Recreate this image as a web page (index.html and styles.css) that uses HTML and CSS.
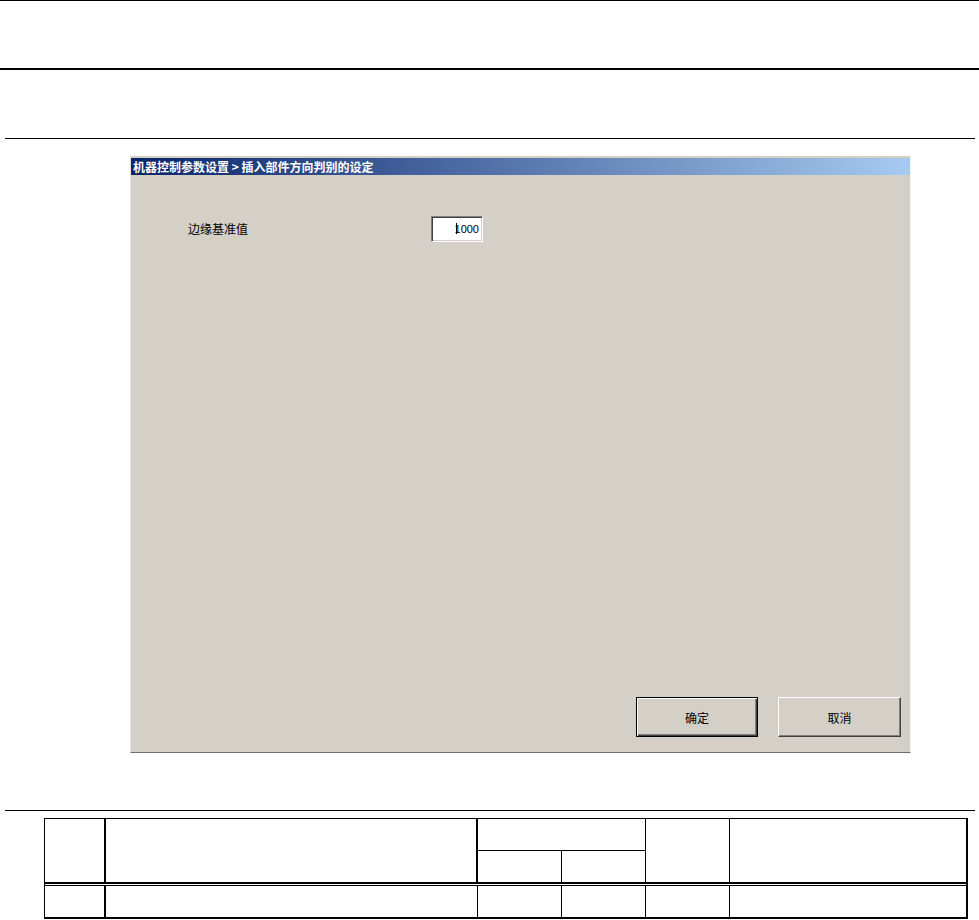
FILE: index.html
```html
<!DOCTYPE html>
<html lang="zh-CN">
<head>
<meta charset="utf-8">
<title>插入部件方向判别的设定</title>
<link rel="stylesheet" href="styles.css">
</head>
<body>
<div class="page">
  <div class="rule rule-top"></div>
  <div class="rule rule-thick"></div>
  <div class="rule rule-thin rule-a"></div>

  <section class="window">
    <div class="titlebar"><span class="title">机器控制参数设置 &gt; 插入部件方向判别的设定</span></div>
    <div class="win-body">
      <div class="field">
        <span class="field-label">边缘基准值</span>
        <div class="input"><span class="caret"></span>1000</div>
      </div>
      <div class="actions">
        <button class="btn btn-default">确定</button>
        <button class="btn">取消</button>
      </div>
    </div>
  </section>

  <div class="rule rule-thin rule-b"></div>

  <div class="tbl">
    <div class="c c1 r12"></div>
    <div class="c c2 r12 thick-r"></div>
    <div class="c c34 r1"></div>
    <div class="c c5 r12 btm2"></div>
    <div class="c c6 r12 btm2 no-r"></div>
    <div class="c c3 r2 btm2"></div>
    <div class="c c4 r2 btm2"></div>
    <div class="sep"></div>
    <div class="c b1 thick-r"></div>
    <div class="c b2"></div>
    <div class="c b3"></div>
    <div class="c b4"></div>
    <div class="c b5"></div>
    <div class="c b6 no-r"></div>
  </div>
</div>
</body>
</html>
```
FILE: styles.css
```css
* { box-sizing: border-box; }
html, body { margin: 0; padding: 0; background: #fff; }
body { font-family: "Noto Sans CJK SC", "Liberation Sans", sans-serif; color: #000; }
.page { width: 979px; }

.rule { background: #000; }
.rule-top { height: 1px; width: 979px; }
.rule-thick { height: 2px; width: 979px; margin-top: 67px; }
.rule-thin { height: 1px; width: 970px; margin-left: 5px; }
.rule-a { margin-top: 68px; }
.rule-b { margin-top: 57px; }

/* dialog window */
.window {
  margin-top: 17px;
  margin-left: 130px;
  width: 781px;
  height: 597px;
  background: #d4d0c8;
  border-top: 1px solid #d4d0c8;
  border-left: 1px solid #e6e3dc;
  border-right: 1px solid #f4f3ef;
  border-bottom: 1px solid #6f6f6f;
  padding-top: 1px;
  display: flex;
  flex-direction: column;
}
.titlebar {
  height: 17px;
  background: linear-gradient(to right, #0a246a, #a6caf0);
  display: flex;
  align-items: center;
  padding-left: 2px;
}
.title {
  color: #fff;
  font-weight: bold;
  font-size: 12px;
  line-height: 12px;
  white-space: nowrap;
}
.win-body {
  flex: 1;
  display: flex;
  flex-direction: column;
  padding: 41px 9px 15px 57px;
}
.field { display: flex; align-items: center; height: 26px; }
.field-label { width: 243px; font-size: 12px; line-height: 12px; }
.input {
  width: 52px;
  height: 26px;
  background: #fff;
  border: 1px solid;
  border-color: #808080 #fff #fff #808080;
  box-shadow: inset 1px 1px #404040, inset -1px -1px #d4d0c8;
  font-family: "Liberation Sans", sans-serif;
  font-size: 11px;
  text-align: right;
  line-height: 24px;
  padding-right: 3px;
}
.caret {
  display: inline-block;
  width: 1px;
  height: 11px;
  background: #000;
  vertical-align: -1px;
  margin-right: -2px;
  position: relative;
}
.actions {
  margin-top: auto;
  display: flex;
  justify-content: flex-end;
  gap: 20px;
}
.btn {
  width: 122px;
  height: 40px;
  background: #d4d0c8;
  font-family: "Noto Sans CJK SC", sans-serif;
  font-size: 12px;
  color: #000;
  padding: 0;
  border: 1px solid;
  border-color: #fff #404040 #404040 #fff;
  box-shadow: inset -1px -1px #808080;
}
.btn + .btn { width: 123px; }
.btn-default {
  border: 1px solid #000;
  box-shadow: inset 1px 1px #fff, inset -1px -1px #404040, inset -2px -2px #808080;
}

/* bottom table */
.tbl {
  margin-top: 7px;
  margin-left: 44px;
  width: 924px;
  display: grid;
  grid-template-columns: 61px 372px 84px 84px 84px 236px;
  grid-template-rows: 32px 33px 2px 31px;
  border-top: 1px solid #000;
  border-left: 1px solid #000;
  border-right: 2px solid #000;
  border-bottom: 2px solid #000;
}
.c { border-right: 1px solid #000; }
.c.thick-r, .c1, .b1 { border-right: 2px solid #000; }
.c.no-r { border-right: 0; }
.c1 { grid-column: 1; grid-row: 1 / 3; border-bottom: 2px solid #000; }
.c2 { grid-column: 2; grid-row: 1 / 3; border-bottom: 2px solid #000; border-right: 1px solid #000; }
.c34 { grid-column: 3 / 5; grid-row: 1; border-bottom: 1px solid #000; }
.c5 { grid-column: 5; grid-row: 1 / 3; }
.c6 { grid-column: 6; grid-row: 1 / 3; }
.c3 { grid-column: 3; grid-row: 2; }
.c4 { grid-column: 4; grid-row: 2; }
.btm2 { border-bottom: 2px solid #000; }
.sep { grid-column: 1 / 7; grid-row: 3; border-bottom: 1px solid #000; }
.b1 { grid-column: 1; grid-row: 4; }
.b2 { grid-column: 2; grid-row: 4; }
.b3 { grid-column: 3; grid-row: 4; }
.b4 { grid-column: 4; grid-row: 4; }
.b5 { grid-column: 5; grid-row: 4; }
.b6 { grid-column: 6; grid-row: 4; }
```
